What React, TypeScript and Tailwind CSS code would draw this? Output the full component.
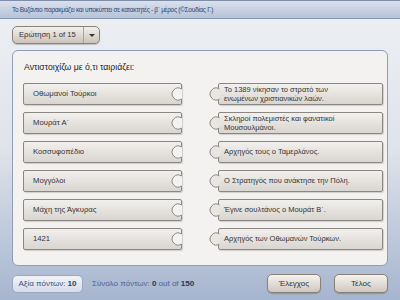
import { ReactNode } from "react";

const leftItems = [
  "Οθωμανοί Τούρκοι",
  "Μουράτ Α΄",
  "Κοσσυφοπέδιο",
  "Μογγόλοι",
  "Μάχη της Άγκυρας",
  "1421",
];

// the source wraps these two at a fixed point, so the break is kept here
const rightItems = [
  "Το 1389 νίκησαν  το στρατό των\nενωμένων χριστιανικών λαών.",
  "Σκληροί πολεμιστές και φανατικοί\nΜουσουλμάνοι.",
  "Αρχηγός τους ο Ταμερλάνος.",
  "Ο Στρατηγός που ανάκτησε την Πόλη.",
  "Έγινε σουλτάνος ο Μουράτ Β΄.",
  "Αρχηγός των Οθωμανών Τούρκων.",
];

const font = { fontFamily: '"Liberation Sans", Arial, sans-serif' };

const LeftPiece = ({ children }: { children: ReactNode }) => (
  <div className="relative h-[22px] w-[159px] rounded-[2px] border border-[#8c8782] bg-gradient-to-b from-[#f2f0ed] to-[#d9d5d0] shadow-[1px_1px_1px_rgba(0,0,0,0.15)] flex items-center pl-[9px] text-[7.7px] text-[#333]">
    {children}
    <svg
      className="absolute right-[-1px] top-1/2 -translate-y-1/2"
      width="14"
      height="16"
      viewBox="0 0 14 16"
    >
      <rect x="11.5" y="3" width="3" height="10" fill="#f3f2f0" />
      <path d="M13.5 3 A6 6 0 1 0 13.5 13 Z" fill="#f3f2f0" />
      <path d="M13.5 3 A6 6 0 1 0 13.5 13" fill="none" stroke="#8c8782" strokeWidth="1" />
    </svg>
  </div>
);

const RightPiece = ({ children }: { children: ReactNode }) => (
  <div className="relative h-[22px] w-[165px] rounded-[2px] border border-[#8c8782] bg-gradient-to-b from-[#f2f0ed] to-[#d9d5d0] shadow-[1px_1px_1px_rgba(0,0,0,0.15)] flex items-center pl-[5px] text-[7.5px] leading-[9.5px] text-[#333]">
    <span className="w-[150px] whitespace-pre-line">{children}</span>
    <svg
      className="absolute left-[-13px] top-1/2 -translate-y-1/2"
      width="14"
      height="16"
      viewBox="0 0 14 16"
    >
      <path d="M13.5 3 A6 6 0 1 0 13.5 13 Z" fill="#e9e6e2" />
      <rect x="12" y="3.5" width="3" height="9" fill="#e9e6e2" />
      <path d="M13.5 3 A6 6 0 1 0 13.5 13" fill="none" stroke="#8c8782" strokeWidth="1" />
    </svg>
  </div>
);

export default function App() {
  return (
    <div
      className="w-[400px] h-[300px] flex flex-col overflow-hidden bg-gradient-to-b from-[#eef0f3] via-[#dfe3ea] to-[#a6b5cf]"
      style={font}
    >
      <div className="h-[19px] shrink-0 flex items-center px-3 border-t border-[#7f8ea8] border-b border-b-[#8797b2] bg-gradient-to-b from-[#dbe1ec] to-[#b5c2d8] text-[6.5px] tracking-[-0.3px] text-[#2d4675]">
        Το Βυζάντιο παρακμάζει και υποκύπτει σε κατακτητές - β΄ μέρος (©Σουδίας Γ.)
      </div>

      <div className="flex-1 flex flex-col px-3">
        <div className="mt-[7px] h-[18px] w-[88px] flex items-center rounded-[5px] border border-[#8a8179] bg-gradient-to-b from-[#f3f0ec] to-[#cbc4bc] shadow-[0_1px_1px_rgba(0,0,0,0.2)] text-[7.6px] text-[#333]">
          <span className="pl-[6px] w-[70px]">Ερώτηση 1 of 15</span>
          <span className="h-full border-l border-[#a9a29a]" />
          <span className="flex-1 flex justify-center">
            <span className="block w-0 h-0 border-l-[3px] border-r-[3px] border-t-[3px] border-l-transparent border-r-transparent border-t-[#333]" />
          </span>
        </div>

        <div className="mt-[6px] h-[216px] rounded-[6px] border border-[#8e9db7] bg-[#f3f2f0] pl-[10px] pr-[4px] pt-[10px]">
          <div className="text-[8.7px] leading-[13px] text-[#222] pl-px">Αντιστοιχίζω με ό,τι ταιριάζει:</div>
          <div className="mt-[9px] flex justify-between">
            <div className="flex flex-col gap-[7px]">
              {leftItems.map((t) => (
                <LeftPiece key={t}>{t}</LeftPiece>
              ))}
            </div>
            <div className="flex flex-col gap-[7px]">
              {rightItems.map((t) => (
                <RightPiece key={t}>{t}</RightPiece>
              ))}
            </div>
          </div>
        </div>

        <div className="mt-[8px] flex items-center">
          <div className="h-[18px] w-[71px] flex items-center justify-center rounded-[5px] border border-[#9aa8c1] bg-gradient-to-b from-[#f1f3f7] to-[#d6dce8] text-[8px] text-[#3a4f78]">
            Αξία πόντων: <span className="font-bold ml-[2px] text-[#2a3e66]">10</span>
          </div>
          <div className="ml-[9px] text-[8px] text-[#4d6290]">
            Σύνολο πόντων: <span className="font-bold text-[#23375f]">0</span> out of{" "}
            <span className="font-bold text-[#23375f]">150</span>
          </div>
          <div className="ml-auto flex gap-[13px]">
            <button className="h-[19px] w-[54px] rounded-[5px] border border-[#8a8179] bg-gradient-to-b from-[#f5f2ee] to-[#cfc8c0] shadow-[0_1px_1px_rgba(0,0,0,0.2)] text-[8px] text-[#333]">
              Έλεγχος
            </button>
            <button className="h-[19px] w-[54px] rounded-[5px] border border-[#8a8179] bg-gradient-to-b from-[#f5f2ee] to-[#cfc8c0] shadow-[0_1px_1px_rgba(0,0,0,0.2)] text-[8px] text-[#333]">
              Τέλος
            </button>
          </div>
        </div>
      </div>
    </div>
  );
}
